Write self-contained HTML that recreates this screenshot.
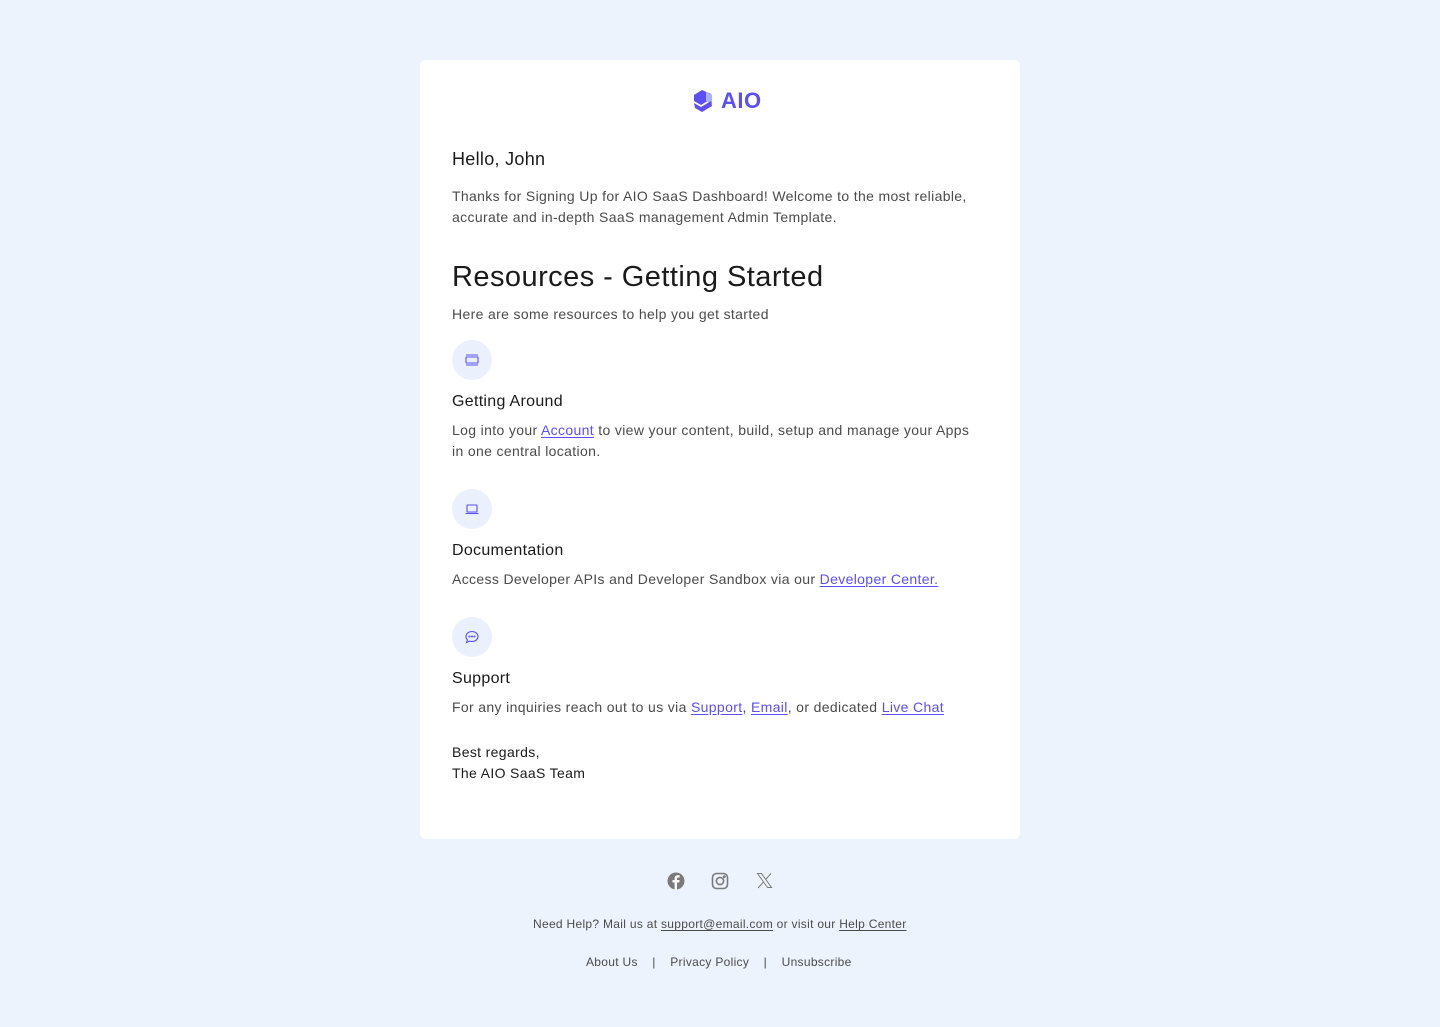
<!DOCTYPE html>
<html><head><meta charset="utf-8"><style>
*{margin:0;padding:0;box-sizing:border-box}
body{width:1440px;height:1027px;background:#edf3fd;font-family:"Liberation Sans",sans-serif;position:relative;overflow:hidden}
.card{position:absolute;left:420px;top:60px;width:600px;height:779px;background:#fff;border-radius:6px}
.a{position:absolute;white-space:nowrap}
.p{font-size:14px;color:#4b4b4b;line-height:21px;letter-spacing:0.35px}
.h{font-size:16px;color:#1a1a1a;letter-spacing:0.3px}
a{color:#5b4ff5;text-decoration:underline;text-underline-offset:2px}
.ic{position:absolute;left:32px;width:40px;height:40px;border-radius:50%;background:#ebf0fd;display:flex;align-items:center;justify-content:center}
.f{font-size:12px;color:#4b4b4b;letter-spacing:0.3px}
.f a{color:#4b4b4b}
</style></head><body>
<div class="card">
 <div class="a" style="left:272px;top:28px;display:flex;align-items:center">
  <svg width="22" height="24" viewBox="0 0 22 24"><path d="M10 1 L19 5 L19 10 L9 16 L2 12 L2 6 Z" fill="#5b4ff5"/><path d="M14 3 L20 6 L20 15 L14 12 Z" fill="#a9b4f5"/><path d="M2 14 L9 18 L19 12 L20 17 L10 23 L3 19 Z" fill="#5b4ff5"/></svg>
  <span style="font-size:22px;font-weight:bold;color:#5b4ff5;margin-left:7px;letter-spacing:0.5px">AIO</span>
 </div>
 <div class="a" style="left:32px;top:89px;font-size:18px;color:#1a1a1a;letter-spacing:0.3px">Hello, John</div>
 <div class="a p" style="left:32px;top:126px">Thanks for Signing Up for AIO SaaS Dashboard! Welcome to the most reliable,<br>accurate and in-depth SaaS management Admin Template.</div>
 <div class="a" style="left:32px;top:201px;font-size:29px;color:#1a1a1a;letter-spacing:0.45px">Resources - Getting Started</div>
 <div class="a p" style="left:32px;top:244px">Here are some resources to help you get started</div>
 <div class="ic" style="top:280px"><svg width="16" height="16" viewBox="0 0 16 16" fill="none" stroke="#5b4ff5" stroke-width="1.1"><rect x="2" y="5" width="12" height="6" rx="0.5"/><path d="M2 3h12M2 13h12"/></svg></div>
 <div class="a h" style="left:32px;top:333px">Getting Around</div>
 <div class="a p" style="left:32px;top:360px">Log into your <a>Account</a> to view your content, build, setup and manage your Apps<br>in one central location.</div>
 <div class="ic" style="top:429px"><svg width="16" height="16" viewBox="0 0 16 16" fill="none" stroke="#5b4ff5" stroke-width="1.1"><rect x="3" y="4" width="10" height="7" rx="0.5"/><path d="M1.5 12.5h13"/></svg></div>
 <div class="a h" style="left:32px;top:482px">Documentation</div>
 <div class="a p" style="left:32px;top:509px">Access Developer APIs and Developer Sandbox via our <a>Developer Center.</a></div>
 <div class="ic" style="top:557px"><svg width="16" height="16" viewBox="0 0 16 16" fill="none" stroke="#5b4ff5" stroke-width="1.1"><path d="M8 2.5c3.3 0 6 2.2 6 5s-2.7 5-6 5c-.9 0-1.7-.2-2.4-.4L2.5 13.5l.9-2.6C2.5 10 2 8.8 2 7.5c0-2.8 2.7-5 6-5z"/><circle cx="5.5" cy="7.5" r=".5" fill="#5b4ff5"/><circle cx="8" cy="7.5" r=".5" fill="#5b4ff5"/><circle cx="10.5" cy="7.5" r=".5" fill="#5b4ff5"/></svg></div>
 <div class="a h" style="left:32px;top:610px">Support</div>
 <div class="a p" style="left:32px;top:637px">For any inquiries reach out to us via <a>Support</a>, <a>Email</a>, or dedicated <a>Live Chat</a></div>
 <div class="a p" style="left:32px;top:682px;color:#1a1a1a">Best regards,<br>The AIO SaaS Team</div>
</div>
<svg class="a" style="left:667px;top:872px" width="18" height="18" viewBox="0 0 18 18"><circle cx="9" cy="9" r="8.5" fill="#7a7a7a"/><path d="M10 18V10.5h2.3l.3-2.5H10V6.6c0-.7.3-1.1 1.2-1.1h1.4V3.3c-.3 0-1-.1-1.9-.1-1.9 0-3.1 1.1-3.1 3.2V8H5.5v2.5h2.1V18z" fill="#fff"/></svg>
<svg class="a" style="left:711px;top:872px" width="18" height="18" viewBox="0 0 18 18" fill="none" stroke="#7a7a7a" stroke-width="1.6"><rect x="1.5" y="1.5" width="15" height="15" rx="4"/><circle cx="9" cy="9" r="3.6"/><circle cx="13.3" cy="4.7" r=".6" fill="#7a7a7a"/></svg>
<svg class="a" style="left:756px;top:872px" width="17" height="17" viewBox="0 0 17 17" fill="none" stroke="#7a7a7a" stroke-width="1"><path d="M1.5 1.5h4l10 14h-4z"/><path d="M15 1.5L9.6 7.6M7.4 10L2 16"/></svg>
<div class="a f" style="left:533px;top:917px">Need Help? Mail us at <a>support@email.com</a> or visit our <a>Help Center</a></div>
<div class="a f" style="left:586px;top:955px">About Us&nbsp;&nbsp;&nbsp;&nbsp;|&nbsp;&nbsp;&nbsp;&nbsp;Privacy Policy&nbsp;&nbsp;&nbsp;&nbsp;|&nbsp;&nbsp;&nbsp;&nbsp;Unsubscribe</div>
</body></html>
